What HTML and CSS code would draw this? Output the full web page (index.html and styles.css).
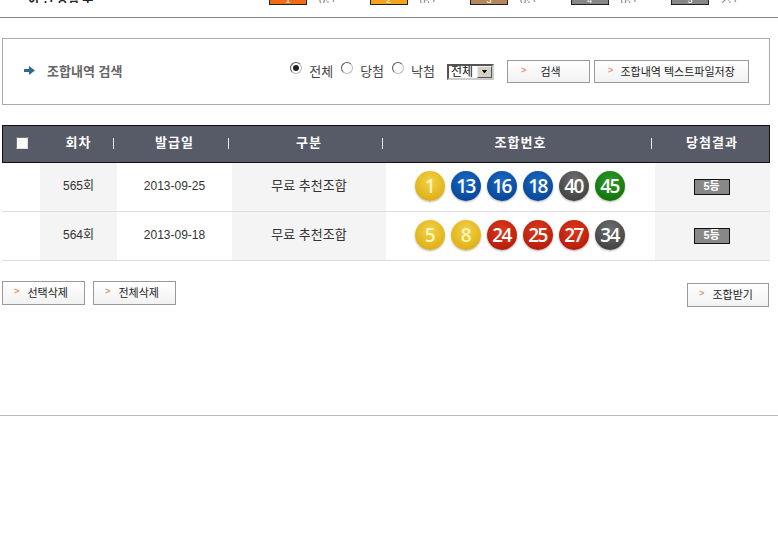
FILE: index.html
```html
<!DOCTYPE html>
<html lang="ko">
<head>
<meta charset="utf-8">
<title>조합내역</title>
<link rel="stylesheet" href="styles.css">
</head>
<body>
<div class="top">
  <div class="top-left">이 번 당첨 수</div>
  <div class="legend">
    <div class="legend-item"><span class="swatch s-orange">1</span><span class="legend-text">0건</span></div>
    <div class="legend-item"><span class="swatch s-amber">2</span><span class="legend-text">0건</span></div>
    <div class="legend-item"><span class="swatch s-brown">3</span><span class="legend-text">0건</span></div>
    <div class="legend-item"><span class="swatch s-gray">4</span><span class="legend-text">0건</span></div>
    <div class="legend-item"><span class="swatch s-gray">5</span><span class="legend-text">2건</span></div>
  </div>
</div>

<div class="search">
  <div class="search-title">
    <svg class="arrow" width="11" height="9" viewBox="0 0 11 9"><path d="M0 3h5V0l6 4.500-6 4.500V6H0z" fill="#2f6a8c"/></svg>
    <span>조합내역 검색</span>
  </div>
  <div class="search-controls">
    <label class="radio"><span class="radio-dot on"></span>전체</label>
    <label class="radio"><span class="radio-dot"></span>당첨</label>
    <label class="radio"><span class="radio-dot"></span>낙첨</label>
    <div class="select"><span>전체</span><span class="select-btn"><svg width="7" height="4" viewBox="0 0 7 4"><path d="M1 0h5L3.500 3.500z" fill="#000"/></svg></span></div>
    <button class="btn btn-search"><span class="chev">&gt;</span><span>검색</span></button>
    <button class="btn btn-save"><span class="chev">&gt;</span><span>조합내역 텍스트파일저장</span></button>
  </div>
</div>

<div class="table">
  <div class="row head">
    <div class="c c-check"><span class="checkbox"></span></div>
    <div class="c c-round sep">회차</div>
    <div class="c c-date sep">발급일</div>
    <div class="c c-type sep">구분</div>
    <div class="c c-nums sep">조합번호</div>
    <div class="c c-res">당첨결과</div>
  </div>
  <div class="row body">
    <div class="c c-check"></div>
    <div class="c c-round tint">565회</div>
    <div class="c c-date">2013-09-25</div>
    <div class="c c-type tint">무료 추천조합</div>
    <div class="c c-nums">
      <span class="ball yellow">1</span><span class="ball blue">13</span><span class="ball blue">16</span><span class="ball blue">18</span><span class="ball dark">40</span><span class="ball green">45</span>
    </div>
    <div class="c c-res tint"><span class="rank">5등</span></div>
  </div>
  <div class="row body">
    <div class="c c-check"></div>
    <div class="c c-round tint">564회</div>
    <div class="c c-date">2013-09-18</div>
    <div class="c c-type tint">무료 추천조합</div>
    <div class="c c-nums">
      <span class="ball yellow">5</span><span class="ball yellow">8</span><span class="ball red">24</span><span class="ball red">25</span><span class="ball red">27</span><span class="ball dark">34</span>
    </div>
    <div class="c c-res tint"><span class="rank">5등</span></div>
  </div>
</div>

<div class="actions">
  <div class="actions-left">
    <button class="btn btn-act"><span class="chev">&gt;</span><span>선택삭제</span></button>
    <button class="btn btn-act"><span class="chev">&gt;</span><span>전체삭제</span></button>
  </div>
  <button class="btn btn-act btn-recv"><span class="chev">&gt;</span><span>조합받기</span></button>
</div>

<div class="bottom-rule"></div>
</body>
</html>
```
FILE: styles.css
```css
* { box-sizing: border-box; }
html, body { margin: 0; padding: 0; background: #fff; }
body {
  width: 778px;
  height: 533px;
  overflow: hidden;
  font-family: "Liberation Sans", "Noto Sans CJK KR", sans-serif;
  font-size: 13px;
  color: #333;
}

.top {
  height: 18px;
  border-bottom: 1px solid #888;
  display: flex;
  overflow: hidden;
}
.top-left {
  width: 269px;
  height: 3px;
  line-height: 0;
  padding-left: 28px;
  overflow: hidden;
  font-size: 12px;
  font-weight: 700;
  color: #222;
}
.legend { display: flex; height: 5px; }
.legend-item { width: 100.500px; display: flex; gap: 12px; height: 5px; }
.swatch {
  display: block;
  width: 38px;
  height: 5px;
  border: 1px solid #222;
  border-top: 0;
  color: #fff;
  font-size: 9px;
  line-height: 1px;
  text-align: center;
  overflow: hidden;
}
.s-orange { background: #ef6c14; }
.s-amber { background: #f5a21d; }
.s-brown { background: #b3875b; }
.s-gray { background: #868686; }
.legend-text { font-size: 11px; line-height: 0; height: 3px; overflow: hidden; color: #777; }

.search {
  margin: 20px 8px 0 2px;
  height: 67px;
  border: 1px solid #aaa;
  display: flex;
  justify-content: space-between;
}
.search-title {
  display: flex;
  align-items: center;
  gap: 12px;
  padding: 0 0 2px 21px;
  font-weight: 700;
  color: #666;
  font-size: 13px;
}
.arrow { display: block; }
.search-controls {
  display: flex;
  align-items: flex-start;
  padding: 21px 20px 0 0;
  color: #444;
}
.radio {
  display: flex;
  align-items: center;
  height: 20px;
  margin-right: 8px;
  gap: 7px;
}
.radio-dot {
  width: 12px;
  height: 12px;
  margin-top: -5px;
  border-radius: 50%;
  border: 1px solid #bbb;
  border-top-color: #555;
  border-left-color: #555;
  background: #fff;
  position: relative;
}
.radio-dot.on::after {
  content: "";
  position: absolute;
  left: 2px;
  top: 2px;
  width: 6px;
  height: 6px;
  border-radius: 50%;
  background: #222;
}
.select {
  width: 47px;
  height: 16px;
  margin: 4px 13px 0 4px;
  border: 2px solid #555;
  border-right-color: #ccc;
  border-bottom-color: #ccc;
  display: flex;
  justify-content: space-between;
  align-items: center;
  padding-left: 2px;
  font-size: 12px;
  line-height: 12px;
  color: #111;
  overflow: hidden;
}
.select-btn {
  width: 15px;
  height: 12px;
  background: #d4d0c8;
  border: 1px solid;
  border-color: #eee #555 #555 #eee;
  display: flex;
  align-items: center;
  justify-content: center;
}
.select-btn svg { display: block; }

.btn {
  display: flex;
  align-items: center;
  height: 23px;
  padding: 0 0 2px;
  border: 1px solid #999;
  background: linear-gradient(#fff, #f2f2f2);
  font-family: inherit;
  font-size: 11px;
  color: #222;
}
.chev { color: #e8946a; font-size: 9px; font-weight: 700; font-family: "Liberation Mono", monospace; }
.btn-search { width: 83px; margin-right: 4px; padding-left: 13px; gap: 14px; }
.btn-save { width: 155px; padding-left: 13px; gap: 7px; }

.table { margin: 20px 8px 0 2px; }
.row { display: flex; }
.head {
  height: 38px;
  background: #575a67;
  border: 1px solid #111;
  color: #fff;
  font-weight: 700;
  font-size: 13px;
  letter-spacing: 1px;
}
.head .c { padding-bottom: 5px; }
.c { display: flex; align-items: center; justify-content: center; position: relative; }
.c-check { width: 38px; flex: none; }
.c-round { width: 77px; flex: none; }
.c-date { width: 115px; flex: none; }
.c-type { width: 154px; flex: none; }
.c-nums { width: 269px; flex: none; }
.c-res { width: 115px; flex: none; }
.head .c-check { width: 37px; padding-bottom: 2px; }
.head .c-res { width: 114px; }
.sep::after {
  content: "";
  position: absolute;
  right: 3px;
  top: 12px;
  width: 1px;
  height: 11px;
  background: #eee;
}
.checkbox {
  width: 12px;
  height: 12px;
  background: #fbfbf8;
  border: 1px solid #888;
  border-color: #777 #ddd #ddd #777;
  margin-left: 1px;
}
.body { height: 49px; border-bottom: 1px solid #ddd; color: #333; font-size: 12px; }
.body .c { padding-bottom: 5px; }
.body .c-date { padding-bottom: 3px; }
.c-type { font-size: 13px; }
.tint { background: #f4f4f4; }
.body .c-nums { gap: 6px; padding: 0 2px 2px 0; }
.ball {
  width: 30px;
  height: 30px;
  border-radius: 50%;
  display: flex;
  align-items: center;
  justify-content: center;
  color: #fff;
  font-family: "Open Sans", "Liberation Sans", sans-serif;
  font-size: 19px;
  font-weight: 600;
  letter-spacing: -1.500px;
  box-shadow: 0 1px 2px rgba(0, 0, 0, .3);
}
.yellow { background: radial-gradient(circle at 50% 35%, #f3d24e, #e0b318 70%, #cf9f10); color: #fff5b8; }
.blue { background: radial-gradient(circle at 50% 35%, #1a6ac2, #0a4a9e 70%, #063a82); }
.dark { background: radial-gradient(circle at 50% 30%, #6e6e6e, #474747 70%, #333); }
.green { background: radial-gradient(circle at 50% 35%, #2f9a2a, #15780f 70%, #0d640b); }
.red { background: radial-gradient(circle at 50% 35%, #dd3a1c, #bb1f0c 70%, #9c1607); }
.body .c-res { padding: 0 2px 0 0; }
.rank {
  width: 36px;
  height: 16px;
  background: #888;
  border: 1px solid #111;
  color: #fff;
  font-size: 11px;
  font-weight: 700;
  line-height: 13px;
  text-align: center;
}

.actions {
  margin: 20px 8px 0 2px;
  display: flex;
  justify-content: space-between;
  align-items: flex-start;
}
.actions-left { display: flex; gap: 8px; }
.btn-act { width: 83px; height: 24px; padding-left: 11px; gap: 8px; }
.btn-recv { width: 82px; margin: 2px 1px 0 0; gap: 8px; }

.bottom-rule {
  margin-top: 108px;
  height: 1px;
  background: #bbb;
}
```
